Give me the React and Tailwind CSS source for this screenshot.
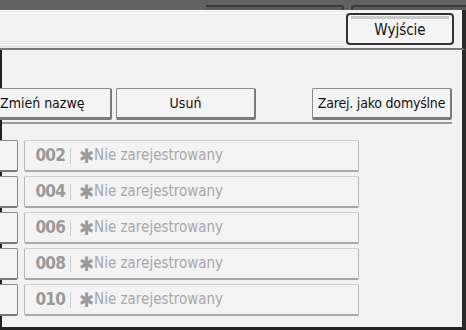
import React from 'react';

const FONT = { fontFamily: '"DejaVu Sans Condensed", "Liberation Sans Narrow", "Liberation Sans", sans-serif' };

const rows = ['002', '004', '006', '008', '010'];

const ActionButton = ({ children, className = '' }) => (
  <div
    className={`h-[32px] flex items-center justify-center whitespace-nowrap bg-[#f4f4f4] border border-[#8a8a8a] border-b-[3px] border-b-[#7a7a7a] border-r-2 border-r-[#7a7a7a] rounded-[2px] text-[14px] text-[#111] ${className}`}
  >
    {children}
  </div>
);

export default function App() {
  return (
    <div className="w-[466px] h-[330px] bg-[#f2f2f2] flex flex-col overflow-hidden" style={FONT}>
      {/* Top bar with tabs */}
      <div className="h-[10px] bg-[#626262] flex items-end relative">
        <div className="absolute left-[206px] top-[5px] w-[138px] h-[5px] border-t-2 border-r-2 border-[#3a3a3a] rounded-tr-[3px] bg-[#5a5a5a]" />
        <div className="absolute left-[351px] top-[5px] w-[115px] h-[5px] border-t-2 border-l-2 border-[#3a3a3a] rounded-tl-[3px] bg-[#5a5a5a]" />
      </div>

      {/* Header strip */}
      <div className="h-[40px] flex border-r-[4px] border-r-[#2a2a2a] border-b-2 border-b-[#7a7a7a] bg-[#f2f2f2]">
        <div className="flex-1 flex flex-col">
          <div className="h-[1px] bg-[#ffffff]" />
          <div className="h-[1px] bg-[#e2e2e2]" />
          <div className="h-[2px] bg-[#fafafa]" />
          <div className="h-[1px] bg-[#e8e8e8]" />
          <div className="flex-1" />
          <div className="h-[1px] bg-[#e4e4e4]" />
          <div className="h-[1px] bg-[#fafafa]" />
          <div className="h-[1px] bg-[#e0e0e0]" />
          <div className="h-[2px] bg-[#f8f8f8]" />
          <div className="h-[1px] bg-[#dcdcdc]" />
          <div className="h-[1px] bg-[#f0f0f0]" />
        </div>
        <div className="flex items-center pr-[8px] pl-[2px]">
          <div className="w-[108px] h-[32px] rounded-[4px] border-2 border-[#333] bg-[#f4f4f4] flex flex-col">
            <div className="h-[3px] mx-[3px] mt-[1px] bg-[#c8c8c8]" />
            <div className="flex-1 flex items-center justify-center text-[15px] text-[#111] pb-[2px]">Wyjście</div>
          </div>
        </div>
      </div>

      {/* Body */}
      <div className="flex-1 flex flex-col border-l-2 border-l-[#222] border-r-[4px] border-r-[#2a2a2a] border-b-[3px] border-b-[#222]">
        {/* Action buttons */}
        <div className="flex items-start mt-[38px] h-[36px] border-b-2 border-b-[#9a9a9a] mr-[10px]">
          <ActionButton className="w-[124px] ml-[-14px] justify-start pl-[11px]">Zmień nazwę</ActionButton>
          <ActionButton className="w-[140px] ml-[4px]">Usuń</ActionButton>
          <div className="flex-1" />
          <ActionButton className="w-[140px] tracking-[-0.2px]">Zarej. jako domyślne</ActionButton>
        </div>

        {/* Rows */}
        <div className="flex flex-col gap-[4px] mt-[16px]">
          {rows.map((n) => (
            <div key={n} className="flex gap-[6px] h-[32px]">
              <div className="w-[18px] ml-[-2px] bg-[#f4f4f4] border border-l-0 border-[#8a8a8a] border-b-2 border-b-[#7a7a7a] rounded-r-[2px]" />
              <div className="w-[335px] flex items-center bg-[#f3f3f3] border border-[#b8b8b8] border-t-[#cfcfcf] border-b-2 border-b-[#a8a8a8] rounded-[2px] text-[#a0a0a0]">
                <div className="w-[40px] text-right text-[17px] font-semibold text-[#9a9a9a] tracking-[-0.8px]">{n}</div>
                <div className="w-[1px] h-[16px] bg-[#cfcfcf] ml-[5px]" />
                <div className="ml-[8px] text-[20px] font-bold text-[#9a9a9a] leading-none">✱</div>
                <div className="ml-[0px] text-[15px] text-[#a8a8a8]">Nie zarejestrowany</div>
              </div>
            </div>
          ))}
        </div>
      </div>
    </div>
  );
}
